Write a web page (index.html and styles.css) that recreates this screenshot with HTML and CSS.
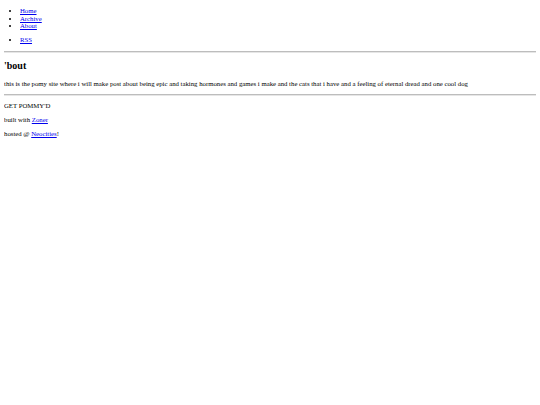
FILE: index.html
```html
<!DOCTYPE html>
<html lang="en">
<head>
<meta charset="utf-8">
<title>pommy</title>
<link rel="stylesheet" href="styles.css">
</head>
<body>
<nav class="site-nav">
  <ul class="nav-list">
    <li><a href="#">Home</a></li>
    <li><a href="#">Archive</a></li>
    <li><a href="#">About</a></li>
  </ul>
  <ul class="nav-list">
    <li><a href="#">RSS</a></li>
  </ul>
</nav>
<hr class="rule">
<main class="content">
  <h2 class="page-title">'bout</h2>
  <p class="text">this is the pomy site where i will make post about being epic and taking hormones and games i make and the cats that i have and a feeling of eternal dread and one cool dog</p>
</main>
<hr class="rule">
<footer class="site-footer">
  <p class="text">GET POMMY'D</p>
  <p class="text">built with <a href="#">Zoner</a></p>
  <p class="text">hosted @ <a href="#">Neocities</a>!</p>
</footer>
</body>
</html>
```

FILE: styles.css
```css
html {
  margin: 0;
  padding: 0;
}
body {
  margin: 0 4px;
  padding: 0;
  font-family: "Liberation Serif", "Times New Roman", serif;
  font-size: 6.75px;
  line-height: 7.4px;
  color: #000;
  background: #fff;
}
.site-nav {
  padding-top: 7.1px;
}
.nav-list {
  margin: 6.9px 0;
  padding-left: 16px;
}
.nav-list:first-child {
  margin-top: 0;
}
.rule {
  height: 0;
  margin: 6.6px 0;
  border: 0;
  border-top: 1px solid #bdbdbd;
  border-bottom: 1px solid #e6e6e6;
}
.page-title {
  font-size: 10px;
  line-height: 11px;
  font-weight: bold;
  margin: 7.5px 0 8.9px;
}
.text {
  margin: 6.6px 0;
}
a {
  color: #0000ee;
  text-decoration: underline;
}
```
